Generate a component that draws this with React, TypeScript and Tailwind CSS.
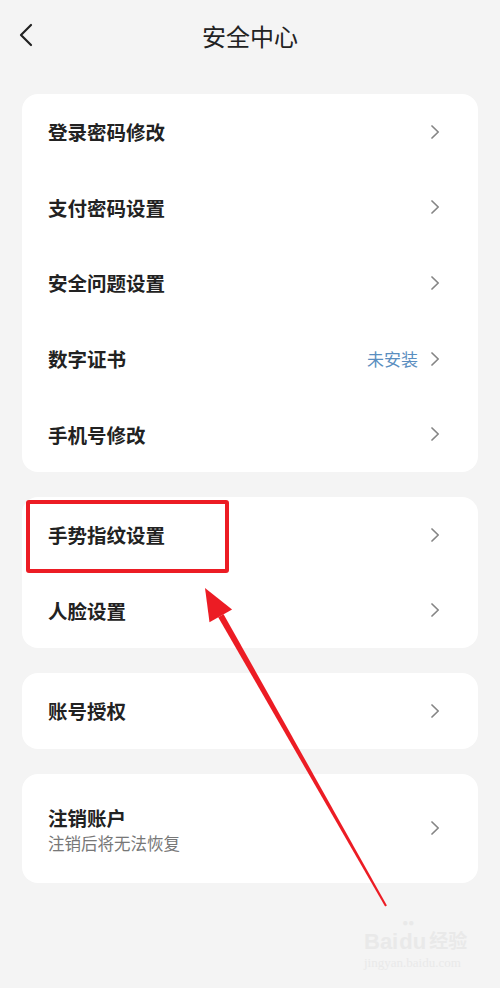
import React from "react";

const font = { fontFamily: '"Noto Sans CJK SC", "Noto Sans", sans-serif' };

function Chevron() {
  return (
    <svg width="10" height="14" viewBox="0 0 10 14" className="shrink-0">
      <path d="M2 1 L8.2 7 L2 13" fill="none" stroke="#858585" strokeWidth="1.7" strokeLinecap="round" strokeLinejoin="round" />
    </svg>
  );
}

function Row({ label, extra }: { label: string; extra?: string }) {
  return (
    <div className="flex h-[75.6px] items-center justify-between pl-[26px] pr-[38px]">
      <span className="text-[19.5px] font-bold text-[#222]">{label}</span>
      <div className="flex items-center gap-[12px]">
        {extra && <span className="text-[17px] text-[#5a8ec0]">{extra}</span>}
        <Chevron />
      </div>
    </div>
  );
}

export default function App() {
  return (
    <div className="relative h-[988px] w-[500px] overflow-hidden bg-[#f4f4f4]" style={font}>
      <div className="relative flex h-[71px] items-center justify-center">
        <svg width="16" height="24" viewBox="0 0 16 24" className="absolute left-[18px] top-[23px]">
          <path d="M13 2 L3 12 L13 22" fill="none" stroke="#222" strokeWidth="2.2" strokeLinecap="round" strokeLinejoin="round" />
        </svg>
        <span className="text-[24px] text-[#222]">安全中心</span>
      </div>

      <div className="flex flex-col gap-[25px] px-[22px] pt-[23px]">
        <div className="rounded-[16px] bg-white">
          <Row label="登录密码修改" />
          <Row label="支付密码设置" />
          <Row label="安全问题设置" />
          <Row label="数字证书" extra="未安装" />
          <Row label="手机号修改" />
        </div>
        <div className="rounded-[16px] bg-white">
          <Row label="手势指纹设置" />
          <Row label="人脸设置" />
        </div>
        <div className="rounded-[16px] bg-white">
          <Row label="账号授权" />
        </div>
        <div className="flex h-[109px] items-center justify-between rounded-[16px] bg-white pl-[26px] pr-[38px]">
          <div className="flex flex-col pt-[4px]">
            <span className="text-[19.5px] font-bold leading-[26px] text-[#222]">注销账户</span>
            <span className="text-[16.5px] leading-[24px] text-[#777]">注销后将无法恢复</span>
          </div>
          <Chevron />
        </div>
      </div>

      {/* annotation box */}
      <div className="absolute left-[26px] top-[500px] h-[73px] w-[203px] rounded-[3px] border-[4px] border-[#ec1c24]" />

      {/* annotation arrow */}
      <svg className="absolute left-0 top-0" width="500" height="988" viewBox="0 0 500 988">
        <polygon points="223.6,614.3 218.2,617.3 385.1,906.5 386.9,905.5" fill="#ec1c24" />
        <polygon points="205,588 232.1,609.4 209.5,622.2" fill="#ec1c24" />
      </svg>

      {/* watermark */}
      <div className="absolute left-[364px] top-[930px] flex flex-col items-start">
        <div className="flex items-end gap-[1px] text-[22px] font-bold leading-[24px] text-[#e9e9e9]" style={{ fontFamily: '"Liberation Sans", "Noto Sans CJK SC", sans-serif' }}>
          <span>Bai</span>
          <span className="relative">
            du
            <span className="absolute -top-[12px] left-[3px] text-[10px] leading-none">●●</span>
          </span>
          <span className="ml-[2px] text-[19px]">经验</span>
        </div>
        <span className="text-[13px] leading-[18px] text-[#e9e9e9]" style={{ fontFamily: '"Liberation Serif", serif' }}>jingyan.baidu.com</span>
      </div>
    </div>
  );
}
